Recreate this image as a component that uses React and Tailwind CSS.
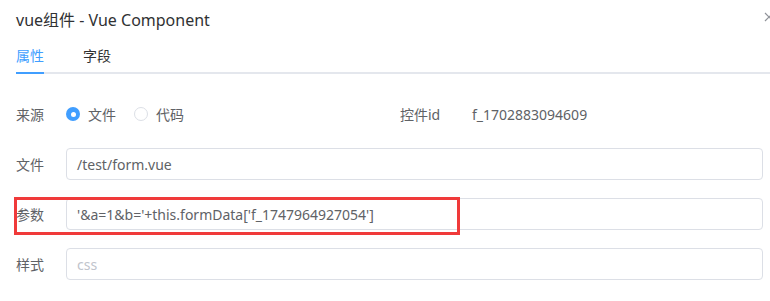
export default function App() {
  const font = { fontFamily: '"Noto Sans", "Noto Sans CJK SC", sans-serif' };
  return (
    <div className="relative w-[770px] h-[301px] overflow-hidden bg-white" style={font}>
      <div className="flex items-center h-[38px] pl-4 pt-[1px]">
        <span className="text-[16px] text-[#303133]">vue组件 - Vue Component</span>
      </div>
      <svg className="absolute left-[764px] top-[12px]" width="10" height="10" viewBox="0 0 10 10">
        <path d="M1 1 L9 9 M9 1 L1 9" stroke="#909399" strokeWidth="1.2" fill="none" />
      </svg>
      <div className="ml-4">
        <div className="flex h-[34px] items-end">
          <div className="w-[28px] h-[34px] flex items-center text-[14px] text-[#409eff]">属性</div>
          <div className="ml-[39px] h-[34px] flex items-center text-[14px] text-[#303133]">字段</div>
        </div>
        <div className="relative h-[2px] bg-[#e4e7ed]">
          <div className="absolute left-0 top-0 h-[2px] w-[28px] bg-[#409eff]" />
        </div>
      </div>
      <div className="pl-4 pt-[24px] pr-[7px] text-[14px] text-[#606266]">
        <div className="flex h-[32px] items-center mb-[18px]">
          <div className="w-[50px]">来源</div>
          <div className="flex items-center w-[334px]">
            <span className="w-[14px] h-[14px] rounded-full bg-[#409eff] flex items-center justify-center">
              <span className="w-[5px] h-[5px] rounded-full bg-white" />
            </span>
            <span className="ml-[8px]">文件</span>
            <span className="ml-[18px] w-[14px] h-[14px] rounded-full border border-[#dcdfe6] bg-white" />
            <span className="ml-[8px]">代码</span>
          </div>
          <div className="w-[72px]">控件id</div>
          <div>f_1702883094609</div>
        </div>
        <div className="flex h-[32px] items-center mb-[18px]">
          <div className="w-[50px]">文件</div>
          <div className="flex-1 h-[32px] border border-[#dcdfe6] rounded-[4px] px-[10px] flex items-center">/test/form.vue</div>
        </div>
        <div className="flex h-[32px] items-center mb-[18px]">
          <div className="w-[50px]">参数</div>
          <div className="flex-1 h-[32px] border border-[#dcdfe6] rounded-[4px] px-[10px] flex items-center">'&amp;a=1&amp;b='+this.formData['f_1747964927054']</div>
        </div>
        <div className="flex h-[32px] items-center">
          <div className="w-[50px]">样式</div>
          <div className="flex-1 h-[32px] border border-[#dcdfe6] rounded-[4px] px-[10px] flex items-center text-[#c0c4cc]">css</div>
        </div>
      </div>
      <div className="absolute left-[14px] top-[197px] w-[446px] h-[38px] border-[3px] border-[#f03a3a]" />
    </div>
  );
}
